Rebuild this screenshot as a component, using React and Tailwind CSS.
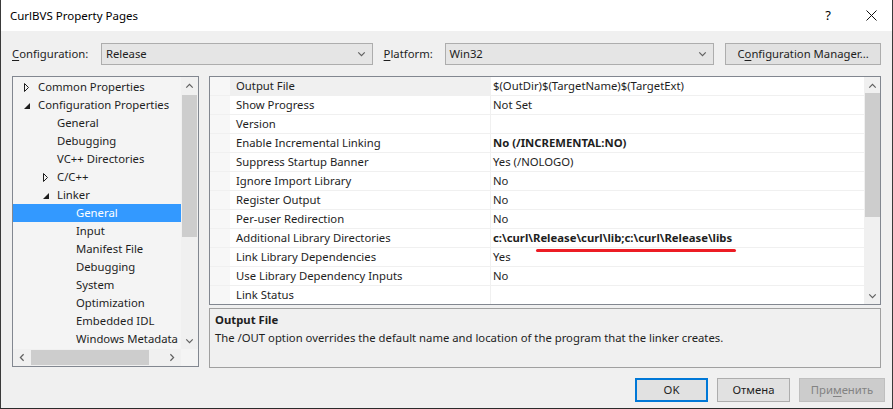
import React from "react";

const treeRows = [
  { text: "Common Properties", level: 0, arrow: "closed" },
  { text: "Configuration Properties", level: 0, arrow: "open" },
  { text: "General", level: 1 },
  { text: "Debugging", level: 1 },
  { text: "VC++ Directories", level: 1 },
  { text: "C/C++", level: 1, arrow: "closed" },
  { text: "Linker", level: 1, arrow: "open" },
  { text: "General", level: 2, selected: true },
  { text: "Input", level: 2 },
  { text: "Manifest File", level: 2 },
  { text: "Debugging", level: 2 },
  { text: "System", level: 2 },
  { text: "Optimization", level: 2 },
  { text: "Embedded IDL", level: 2 },
  { text: "Windows Metadata", level: 2 },
];

const props = [
  ["Output File", "$(OutDir)$(TargetName)$(TargetExt)"],
  ["Show Progress", "Not Set"],
  ["Version", ""],
  ["Enable Incremental Linking", "No (/INCREMENTAL:NO)", true],
  ["Suppress Startup Banner", "Yes (/NOLOGO)"],
  ["Ignore Import Library", "No"],
  ["Register Output", "No"],
  ["Per-user Redirection", "No"],
  ["Additional Library Directories", "c:\\curl\\Release\\curl\\lib;c:\\curl\\Release\\libs", true],
  ["Link Library Dependencies", "Yes"],
  ["Use Library Dependency Inputs", "No"],
  ["Link Status", ""],
];

const Chevron = ({ dir = "down", className = "" }) => {
  const d = {
    down: "M1 1.5 L4.5 5 L8 1.5",
    up: "M1 5 L4.5 1.5 L8 5",
    left: "M5 1 L1.5 4.5 L5 8",
    right: "M1.5 1 L5 4.5 L1.5 8",
  }[dir];
  const box = dir === "up" || dir === "down" ? "0 0 9 6.5" : "0 0 6.5 9";
  return (
    <svg viewBox={box} className={className} fill="none" stroke="currentColor" strokeWidth="1.3">
      <path d={d} />
    </svg>
  );
};

const TreeArrow = ({ type }) =>
  type === "open" ? (
    <svg width="6" height="6" viewBox="0 0 6 6" className="mt-[2px]">
      <path d="M6 0 L6 6 L0 6 Z" fill="#1e1e1e" />
    </svg>
  ) : (
    <svg width="5" height="9" viewBox="0 0 5 9">
      <path d="M0.5 0.5 L4.5 4.5 L0.5 8.5 Z" fill="none" stroke="#1e1e1e" strokeWidth="1" />
    </svg>
  );

const Combo = ({ value, className }) => (
  <div className={`h-[22px] bg-[#e5e5e5] border border-[#adadad] flex items-center pl-[4px] pr-[6px] ${className}`}>
    <span className="flex-1">{value}</span>
    <Chevron dir="down" className="w-[9px] h-[6px] text-[#606060]" />
  </div>
);

export default function App() {
  return (
    <div
      className="w-[893px] h-[409px] bg-[#2b2b2b] text-[11.3px] text-[#1e1e1e] overflow-hidden"
      style={{ fontFamily: '"Noto Sans", "Open Sans", sans-serif' }}
    >
      <div className="h-[408px] bg-[#f0f0f0] border-x border-[#3a3a3a] flex flex-col">
        {/* title bar */}
        <div className="h-[31px] bg-white flex items-center pl-[9px] shrink-0">
          <span className="flex-1 text-[11.5px] text-black">CurlBVS Property Pages</span>
          <span className="w-[46px] text-center text-[13px] text-black">?</span>
          <svg width="11" height="11" viewBox="0 0 11 11" className="mr-[15px] ml-[15px]">
            <path d="M0.5 0.5 L10.5 10.5 M10.5 0.5 L0.5 10.5" stroke="#111" strokeWidth="1" />
          </svg>
        </div>

        <div className="pl-[11px] pr-[11px] pt-[12px] flex flex-col">
          {/* config row */}
          <div className="flex items-center h-[22px]">
            <span className="w-[89px]">
              <span className="underline underline-offset-2">C</span>onfiguration:
            </span>
            <Combo value="Release" className="w-[272px]" />
            <span className="ml-[11px] w-[61px]">
              <span className="underline underline-offset-2">P</span>latform:
            </span>
            <Combo value="Win32" className="w-[270px]" />
            <div className="ml-[11px] h-[22px] w-[156px] bg-[#e1e1e1] border border-[#adadad] flex items-center justify-center">
              C<span className="underline underline-offset-2">o</span>nfiguration Manager...
            </div>
          </div>

          {/* main area */}
          <div className="flex mt-[11px] gap-[10px]">
            {/* tree */}
            <div className="w-[187px] h-[291px] border border-[#828790] bg-[#f4f4f4] flex flex-col">
              <div className="flex flex-1 min-h-0">
                <div className="flex-1 pt-[1px] overflow-hidden">
                  {treeRows.map((r, i) => (
                    <div
                      key={i}
                      className={`h-[18px] flex items-center whitespace-nowrap ${
                        r.selected ? "bg-[#3399ff] text-white" : ""
                      }`}
                      style={{ paddingLeft: 6 + r.level * 19 }}
                    >
                      <span className="w-[19px] flex items-center pl-[5px]">
                        {r.arrow && <TreeArrow type={r.arrow} />}
                      </span>
                      <span>{r.text}</span>
                    </div>
                  ))}
                </div>
                <div className="w-[17px] bg-[#f0f0f0] flex flex-col items-center">
                  <div className="h-[17px] flex items-center justify-center">
                    <Chevron dir="up" className="w-[9px] h-[6px] text-[#606060]" />
                  </div>
                  <div className="w-[15px] h-[142px] bg-[#cdcdcd] mt-[1px]" />
                  <div className="flex-1" />
                  <div className="h-[17px] flex items-center justify-center">
                    <Chevron dir="down" className="w-[9px] h-[6px] text-[#606060]" />
                  </div>
                </div>
              </div>
              <div className="h-[17px] bg-[#f0f0f0] flex items-center shrink-0 mr-[17px]">
                <div className="w-[18px] flex justify-center">
                  <Chevron dir="left" className="w-[6px] h-[9px] text-[#606060]" />
                </div>
                <div className="h-[15px] w-[118px] bg-[#cdcdcd]" />
                <div className="flex-1" />
                <div className="w-[18px] flex justify-center">
                  <Chevron dir="right" className="w-[6px] h-[9px] text-[#606060]" />
                </div>
              </div>
            </div>

            {/* right column */}
            <div className="flex-1 flex flex-col gap-[3px]">
              <div className="relative h-[229px] border border-[#828790] bg-white flex">
                <div className="flex-1 overflow-hidden">
                  {props.map(([name, value, bold], i) => (
                    <div key={i} className="h-[19px] flex border-b border-[#f0f0f0]">
                      <div className="w-[20px] bg-[#f7f7f7] shrink-0" />
                      <div
                        className={`w-[261px] shrink-0 pl-[6px] flex items-center border-r border-[#f0f0f0] ${
                          i === 0 ? "bg-[#f0f0f0]" : ""
                        }`}
                      >
                        {name}
                      </div>
                      <div className={`flex-1 pl-[2px] flex items-center whitespace-nowrap ${bold ? "font-bold" : ""}`}>
                        {value}
                      </div>
                    </div>
                  ))}
                </div>
                <div className="w-[16px] bg-[#f0f0f0] flex flex-col items-center">
                  <div className="h-[17px] flex items-center justify-center">
                    <Chevron dir="up" className="w-[9px] h-[6px] text-[#606060]" />
                  </div>
                  <div className="w-[15px] h-[124px] bg-[#cdcdcd] mt-[-1px]" />
                  <div className="flex-1" />
                  <div className="h-[17px] flex items-center justify-center">
                    <Chevron dir="down" className="w-[9px] h-[6px] text-[#606060]" />
                  </div>
                </div>
                <div className="absolute left-[326px] top-[172px] w-[200px] h-[3px] rounded-full bg-[#ec1c24]" />
              </div>
              <div className="h-[60px] border border-[#a0a0a0] bg-[#f0f0f0] pl-[5px] pt-[2px]">
                <div className="font-bold leading-[18px]">Output File</div>
                <div className="leading-[18px]">
                  The /OUT option overrides the default name and location of the program that the linker creates.
                </div>
              </div>
            </div>
          </div>

          {/* buttons */}
          <div className="flex justify-end gap-[9px] mt-[10px] mr-[-4px]">
            <div className="w-[73px] h-[24px] bg-[#e1e1e1] border-2 border-[#0078d7] flex items-center justify-center">
              OK
            </div>
            <div className="w-[73px] h-[24px] bg-[#e1e1e1] border border-[#adadad] flex items-center justify-center">
              Отмена
            </div>
            <div className="w-[86px] h-[24px] bg-[#cccccc] border border-[#bfbfbf] text-[#838383] flex items-center justify-center">
              При<span className="underline underline-offset-2">м</span>енить
            </div>
          </div>
        </div>
      </div>
    </div>
  );
}
